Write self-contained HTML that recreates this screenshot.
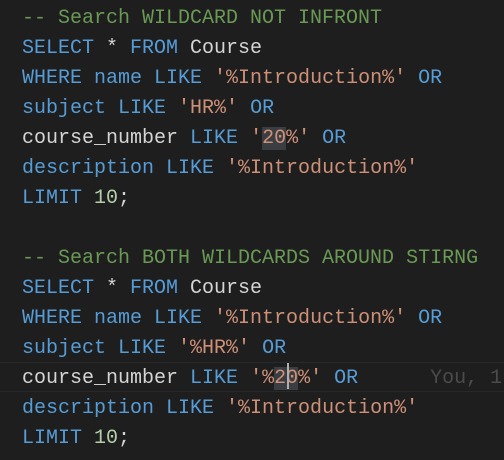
<html><head><style>
body{margin:0;background:#1e1e1e;width:504px;height:460px;overflow:hidden;position:relative}
.l{position:absolute;left:22px;height:30px;line-height:30px;font:20px "Liberation Mono",monospace;color:#d4d4d4;white-space:pre;margin-top:5px}
.c{color:#6a9955}.k{color:#569cd6}.s{color:#ce9178}.n{color:#b5cea8}
.hl{position:absolute;left:0;width:504px;top:362px;height:28px;border-top:1px solid #282828;border-bottom:1px solid #282828;background:#1e1e1e}
.sel{background:#3a3d41}
.g{color:#4b4b4b}
</style></head><body>
<div class="hl"></div>
<div class="l" style="top:2px"><span class="c">-- Search WILDCARD NOT INFRONT</span></div>
<div class="l" style="top:32px"><span class="k">SELECT</span> * <span class="k">FROM</span> Course</div>
<div class="l" style="top:62px"><span class="k">WHERE name LIKE</span> <span class="s">'%Introduction%'</span> <span class="k">OR</span></div>
<div class="l" style="top:92px"><span class="k">subject LIKE</span> <span class="s">'HR%'</span> <span class="k">OR</span></div>
<div class="l" style="top:122px">course_number <span class="k">LIKE</span> <span class="s">'<span class="sel">20</span>%'</span> <span class="k">OR</span></div>
<div class="l" style="top:152px"><span class="k">description LIKE</span> <span class="s">'%Introduction%'</span></div>
<div class="l" style="top:182px"><span class="k">LIMIT</span> <span class="n">10</span>;</div>
<div class="l" style="top:242px"><span class="c">-- Search BOTH WILDCARDS AROUND STIRNG</span></div>
<div class="l" style="top:272px"><span class="k">SELECT</span> * <span class="k">FROM</span> Course</div>
<div class="l" style="top:302px"><span class="k">WHERE name LIKE</span> <span class="s">'%Introduction%'</span> <span class="k">OR</span></div>
<div class="l" style="top:332px"><span class="k">subject LIKE</span> <span class="s">'%HR%'</span> <span class="k">OR</span></div>
<div class="l" style="top:362px">course_number <span class="k">LIKE</span> <span class="s">'%<span class="sel">20</span>%'</span> <span class="k">OR</span>      <span class="g">You, 1</span></div>
<div style="position:absolute;left:287px;top:363px;width:2px;height:26px;background:#aeafad"></div>
<div class="l" style="top:392px"><span class="k">description LIKE</span> <span class="s">'%Introduction%'</span></div>
<div class="l" style="top:422px"><span class="k">LIMIT</span> <span class="n">10</span>;</div>
</body></html>
